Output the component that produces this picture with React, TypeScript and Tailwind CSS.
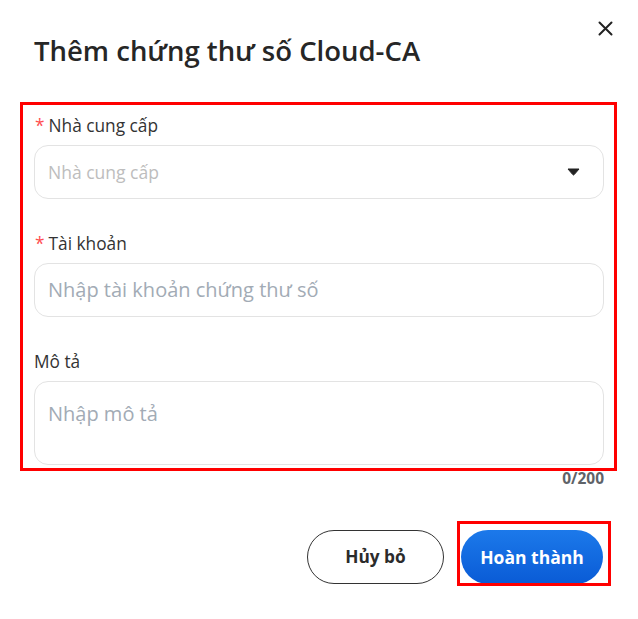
import React from "react";

function Label({ text, required }: { text: string; required?: boolean }) {
  return (
    <div className="h-[25px] pt-[1px] mb-[7px] text-[17.3px] leading-[24px] text-[#333] flex items-center">
      {required && <span className="text-[#ff4d4f] mr-[4px] ml-[1px]">*</span>}
      <span>{text}</span>
    </div>
  );
}

export default function App() {
  return (
    <div className="relative w-[638px] h-[619px] bg-white font-['Open_Sans',sans-serif] overflow-hidden">
      <button className="absolute left-[596px] top-[19px] w-[19px] h-[19px] flex items-center justify-center text-[#222]">
        <svg width="15" height="15" viewBox="0 0 15 15" fill="none" stroke="currentColor" strokeWidth="2" strokeLinecap="round">
          <path d="M1.5 1.5 L13.5 13.5 M13.5 1.5 L1.5 13.5" />
        </svg>
      </button>

      <div className="pl-[34px] pt-[33px]">
        <h1 className="text-[27.5px] leading-[36px] font-semibold text-[#262626]">Thêm chứng thư số Cloud-CA</h1>
      </div>

      <div className="px-[34px] mt-[44px] flex flex-col">
        <Label text="Nhà cung cấp" required />
        <div className="h-[54px] rounded-[14px] border border-[#e3e3e3] flex items-center justify-between pl-[13px] pr-[23px]">
          <span className="text-[17.5px] text-[#bdbdbd]">Nhà cung cấp</span>
          <svg width="13" height="8" viewBox="0 0 13 8">
            <path d="M1 1 H12 L7.2 6.6 Q6.5 7.4 5.8 6.6 Z" fill="#222" stroke="#222" strokeWidth="1" strokeLinejoin="round" />
          </svg>
        </div>

        <div className="mt-[32px]">
          <Label text="Tài khoản" required />
          <div className="h-[54px] rounded-[14px] border border-[#e3e3e3] flex items-center pl-[13px]">
            <span className="text-[20px] text-[#a2abb5]">Nhập tài khoản chứng thư số</span>
          </div>
        </div>

        <div className="mt-[32px]">
          <Label text="Mô tả" />
          <div className="h-[84px] rounded-[14px] border border-[#e3e3e3] pl-[13px] pt-[19px]">
            <span className="text-[20px] leading-[26px] text-[#a2abb5]">Nhập mô tả</span>
          </div>
        </div>

        <div className="mt-[3px] text-right text-[15.5px] leading-[20px] font-bold text-[#5f6368]">0/200</div>

        <div className="mt-[42px] flex justify-end gap-[17px] pr-[1px]">
          <button className="w-[137px] h-[54px] rounded-full border border-[#333] text-[17.3px] font-bold text-[#2b2b2b]">
            Hủy bỏ
          </button>
          <button className="w-[142px] h-[54px] rounded-full bg-gradient-to-b from-[#1c79ea] to-[#0a5bd6] text-[17.5px] font-bold text-white">
            Hoàn thành
          </button>
        </div>
      </div>

      <div className="absolute left-[20px] top-[102px] w-[597px] h-[369px] border-[3px] border-[#ff0000] pointer-events-none" />
      <div className="absolute left-[457px] top-[521px] w-[154px] h-[65px] border-[3px] border-[#ff0000] pointer-events-none" />
    </div>
  );
}
